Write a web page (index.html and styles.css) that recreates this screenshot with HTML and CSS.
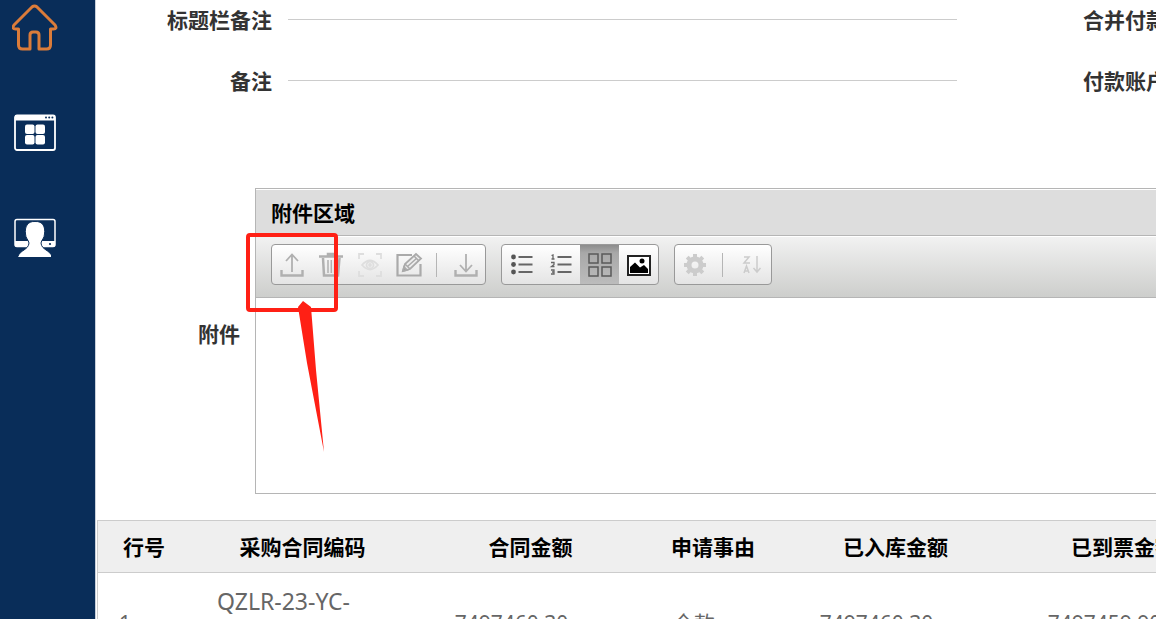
FILE: index.html
```html
<!DOCTYPE html>
<html lang="zh-CN">
<head>
<meta charset="utf-8">
<title>附件</title>
<link rel="stylesheet" href="styles.css">
</head>
<body>
<div class="app">
  <nav class="sidebar">
    <button class="nav-item" type="button" aria-label="首页">
      <svg width="46" height="48" viewBox="0 0 46 48" fill="none" stroke="#db7c3a" stroke-width="3" stroke-linejoin="round"><path d="M20 3Q22.500 1 25 3L43 21Q45.500 25 41.500 25H38.500V41Q38.500 45 34.500 45H27V31Q27 28 24 28H21Q18 28 18 31V45H10.500Q6.500 45 6.500 41V25H3.500Q-.5 25 2 21Z"/></svg>
    </button>
    <button class="nav-item" type="button" aria-label="应用">
      <svg width="42" height="38" viewBox="0 0 42 38"><rect x="1" y="1.500" width="40" height="34.500" rx="2" fill="none" stroke="#fff" stroke-width="1.800"/><path d="M1 1H41V6.500H1Z" fill="#fff"/><g fill="#092d59"><circle cx="32" cy="3.500" r="1"/><circle cx="35.200" cy="3.500" r="1"/><circle cx="38.400" cy="3.500" r="1"/></g><g fill="#fff"><rect x="11" y="10.500" width="9.500" height="9.500" rx="2"/><rect x="21.500" y="10.500" width="9.500" height="9.500" rx="2"/><rect x="11" y="21" width="9.500" height="9.500" rx="2"/><rect x="21.500" y="21" width="9.500" height="9.500" rx="2"/></g></svg>
    </button>
    <button class="nav-item" type="button" aria-label="用户">
      <svg width="42" height="40" viewBox="0 0 42 40"><rect x="1" y="1.500" width="40" height="27" rx="2" fill="none" stroke="#fff" stroke-width="1.500"/><path d="M1 23H41V28.500H1Z" fill="#fff"/><path d="M21 3.500C29 3 31.500 9 30.500 16C30.500 20 27.500 22 27 25C27.500 32 36 32 38 38.500H4C6 32 14.500 32 15 25C14.500 22 11.500 20 11.500 16C10.500 9 13.500 3 21 3.500Z" fill="#fff" stroke="#092d59" stroke-width="1"/><path d="M5 37.500H37V39H4Z" fill="#fff"/><circle cx="36" cy="26" r="1.100" fill="#092d59"/></svg>
    </button>
  </nav>

  <main class="main">
    <form class="form">
      <div class="form-row">
        <label class="label" for="title-note">标题栏备注</label>
        <input class="line-input" id="title-note" type="text">
        <span class="side-label">合并付款</span>
      </div>
      <div class="form-row">
        <label class="label" for="note">备注</label>
        <input class="line-input" id="note" type="text">
        <span class="side-label">付款账户</span>
      </div>
    </form>

    <section class="attachment">
      <h2 class="attachment-label">附件</h2>
      <div class="panel">
        <h3 class="panel-title">附件区域</h3>
        <div class="toolbar">
          <div class="group">
            <button class="tool" type="button" aria-label="上传"><svg width="26" height="26" viewBox="0 0 26 26" fill="none" stroke="#b0b0b0" stroke-width="1.800"><path d="M13 20V3M7 9L13 2.500L19 9"/><path d="M2.500 18V23.500H23.500V18" stroke-width="2.400"/></svg></button>
            <button class="tool" type="button" aria-label="删除"><svg width="26" height="26" viewBox="0 0 26 26" fill="none" stroke="#b0b0b0" stroke-width="2"><path d="M1 4.500H25M10 4V2H17V4" stroke-width="2.500"/><path d="M5 6L6 23.500H20L21.500 6" stroke-width="2.500"/><path d="M10 8V21M13.300 8V21M16.600 8V21" stroke-width="1.500"/></svg></button>
            <button class="tool" type="button" aria-label="预览"><svg width="26" height="26" viewBox="0 0 26 26" fill="none" stroke="#dedede" stroke-width="1.800"><path d="M2 7V2H7M19 2H24V7M24 19V24H19M7 24H2V19M5 13Q13 4 21 13Q13 22 5 13Z"/><circle cx="13" cy="13" r="3.500"/><circle cx="13" cy="13" r="1" fill="#dedede"/></svg></button>
            <button class="tool" type="button" aria-label="编辑"><svg width="28" height="26" viewBox="0 0 28 26" fill="none" stroke="#aaa" stroke-width="1.800"><path d="M17 3H2.500V23.500H25.500V12" stroke-width="2.200"/><path d="M8 19L10 12L21 2L26 6.500L15 17Z" fill="#eee"/><path d="M19 4L24 9M10 12L15 17M13 14L22 6" stroke-width="1.500"/><path d="M8 19L9 15L12 18Z" fill="#999"/></svg></button>
            <span class="divider"></span>
            <button class="tool" type="button" aria-label="下载"><svg width="26" height="26" viewBox="0 0 26 26" fill="none" stroke="#b0b0b0" stroke-width="1.800"><path d="M13 2V19M7 13L13 19.500L19 13"/><path d="M2.500 18V23.500H23.500V18" stroke-width="2.400"/></svg></button>
          </div>
          <div class="group">
            <button class="tool" type="button" aria-label="列表"><svg width="24" height="24" viewBox="0 0 24 24"><g fill="#555"><circle cx="3.500" cy="4" r="2.400"/><circle cx="3.500" cy="11.500" r="2.400"/><circle cx="3.500" cy="19" r="2.400"/></g><path d="M8.500 4H22.500M8.500 11.500H22.500M8.500 19H22.500" stroke="#666" stroke-width="1.800"/></svg></button>
            <button class="tool" type="button" aria-label="编号列表"><svg width="24" height="24" viewBox="0 0 24 24" fill="none" stroke="#666"><path d="M8.500 4H22.500M8.500 11.500H22.500M8.500 19H22.500" stroke-width="1.800"/><path d="M2.500 2.500L4 2V6M2.500 6H5.500M2 9.500H5V11.500L2.500 13.500H5.500M2 17H5V21H2M3 19H5" stroke-width="1.300"/></svg></button>
            <button class="tool tool-active" type="button" aria-label="缩略图" aria-pressed="true"><svg width="26" height="26" viewBox="0 0 26 26" fill="none" stroke="#5a5a5a" stroke-width="1.500"><rect x="2" y="2" width="9" height="9"/><rect x="15" y="2" width="9" height="9"/><rect x="2" y="15" width="9" height="9"/><rect x="15" y="15" width="9" height="9"/></svg></button>
            <button class="tool" type="button" aria-label="图片"><svg width="24" height="22" viewBox="0 0 24 22"><rect x="1" y="2" width="22" height="19" fill="#fff" stroke="#222" stroke-width="2"/><path d="M3 19V13L8 8.500L13 13.500L17 11L21 15V19Z"/><circle cx="15" cy="7" r="2.500"/></svg></button>
          </div>
          <div class="group">
            <button class="tool" type="button" aria-label="设置"><svg width="24" height="24" viewBox="0 0 24 24" fill="none" stroke="#ccc"><circle cx="12" cy="12" r="6" stroke-width="5"/><path d="M12 1V5M12 19V23M1 12H5M19 12H23M4.200 4.200L7 7M17 17L19.800 19.800M4.200 19.800L7 17M17 7L19.800 4.200" stroke-width="4"/></svg></button>
            <span class="divider"></span>
            <button class="tool" type="button" aria-label="排序"><svg width="20" height="20" viewBox="0 0 20 20" fill="none" stroke="#ccc" stroke-width="1.500"><path d="M2 2H7L2 8H8M2 18L4.500 11L7 18M3 16H6M15 1V17M11.500 13L15 17L18.500 13"/></svg></button>
          </div>
        </div>
        <div class="panel-body"></div>
        <svg class="callout" width="92" height="220" viewBox="0 0 92 220" aria-hidden="true"><rect x="2" y="2" width="88" height="75" rx="2" fill="none" stroke="#ff2015" stroke-width="4"/><path d="M57 68L65 74L70 137L78 219L61 130L52 74Z" fill="#ff2015"/></svg>
      </div>
    </section>

    <table class="table">
      <colgroup><col class="col-no"><col class="col-code"><col class="col-amount"><col class="col-reason"><col class="col-amount"><col class="col-code"></colgroup>
      <thead>
        <tr><th>行号</th><th>采购合同编码</th><th>合同金额</th><th>申请事由</th><th>已入库金额</th><th>已到票金额</th></tr>
      </thead>
      <tbody>
        <tr><td>1</td><td class="code">QZLR-23-YC-</td><td>7497460.30</td><td>全款</td><td>7497460.30</td><td>7497459.90</td></tr>
      </tbody>
    </table>
  </main>
</div>
</body>
</html>
```
FILE: styles.css
```css
* { box-sizing: border-box; }

body {
  margin: 0;
  height: 100vh;
  overflow: hidden;
  background: #fff;
  color: #333;
  font: 21px/28px "Noto Sans", "Noto Sans CJK SC", sans-serif;
}

button {
  margin: 0;
  padding: 0;
  border: 0;
  background: none;
  font: inherit;
}

svg { display: block; }

.app { display: flex; height: 100%; }

.sidebar {
  flex: 0 0 96px;
  display: flex;
  flex-direction: column;
  padding-right: 25px;
  border-right: 1px solid #c9d0da;
  background: #092d59;
}

.nav-item {
  display: flex;
  flex-shrink: 0;
  align-items: center;
  justify-content: center;
  height: 105px;
}
.nav-item:first-child { height: 80px; padding-bottom: 24px; }

.main { flex: 1; min-width: 0; overflow: hidden; }

.form { display: flex; flex-direction: column; gap: 22px; }

.form-row { display: flex; align-items: center; height: 39px; }

.label {
  flex: 0 0 176px;
  text-align: right;
  font-weight: 700;
}

.line-input {
  flex: 0 0 669px;
  align-self: flex-start;
  height: 20px;
  margin-left: 16px;
  padding: 0;
  border: 0;
  border-bottom: 1px solid #ccc;
  background: none;
  font: inherit;
  outline: 0;
}

.side-label { margin-left: 126px; white-space: nowrap; font-weight: 700; }

.attachment { display: flex; align-items: center; margin-top: 88px; }

.attachment-label {
  flex: 0 0 144px;
  margin: 0;
  padding-bottom: 14px;
  text-align: right;
  font: inherit;
  font-weight: 700;
}

.panel {
  position: relative;
  flex: 1;
  min-width: 0;
  margin-left: 15px;
  border: 1px solid #b5b5b5;
  border-right: 0;
}

.panel-title {
  margin: 0;
  padding: 10px 15px 8px;
  border-bottom: 1px solid #b5b5b5;
  background: #ddd;
  box-shadow: inset 0 1px #fff;
  color: #000;
  font: inherit;
  font-weight: 700;
}

.toolbar {
  display: flex;
  gap: 15px;
  padding: 8px 15px 12px;
  border-bottom: 1px solid #b5b5b5;
  background: linear-gradient(#f2f2f2, #cdcecc);
  box-shadow: inset 0 1px #fff;
}

.group {
  display: flex;
  height: 41px;
  border: 1px solid #999;
  border-radius: 4px;
  background: linear-gradient(#fff, #e4e4e4);
}

.tool {
  display: flex;
  align-items: center;
  justify-content: center;
  width: 39px;
}

.tool-active {
  background: linear-gradient(#8c8c8c, #a8a8a8 20%, #bcbcbc);
}

.divider {
  width: 1px;
  height: 24px;
  margin: 8px 9px 8px 8px;
  background: #b5b5b5;
}

.panel-body { height: 195px; background: #fff; }

.callout { position: absolute; left: -10px; top: 44px; }

.table {
  width: 1140px;
  margin: 26px 0 0 1px;
  border: 1px solid #ccc;
  border-spacing: 0;
  table-layout: fixed;
}

.col-no { width: 92px; }
.col-code { width: 225px; }
.col-amount { width: 231px; }
.col-reason { width: 134px; }

th {
  height: 52px;
  padding: 0;
  border-bottom: 1px solid #ccc;
  background: #efefef;
  color: #000;
}

td {
  height: 99px;
  padding: 0 38px 0 0;
  color: #666;
  text-align: center;
  white-space: nowrap;
}

.code { padding-top: 14px; font-size: 23px; vertical-align: top; }
```
